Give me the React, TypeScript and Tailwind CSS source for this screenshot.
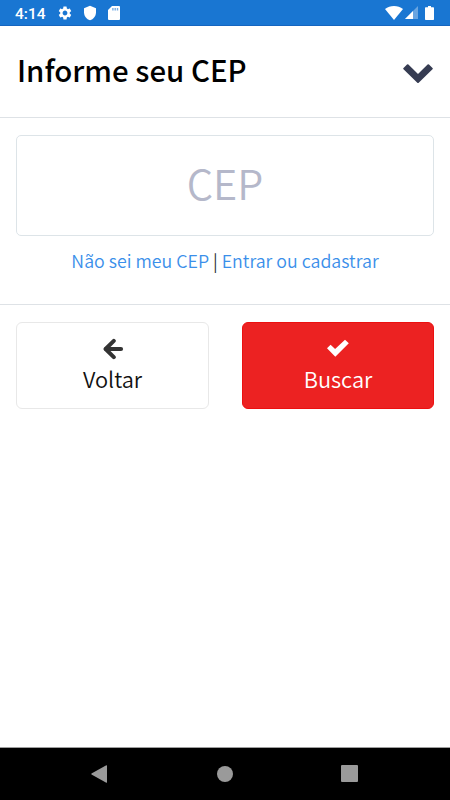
import React from 'react';
import { MdSettings, MdShield } from 'react-icons/md';

const StatusBar: React.FC = () => (
  <div className="flex h-[26px] shrink-0 items-center border-b border-[#1565c0] bg-[#1976d2] pl-[15px] pr-4 text-white">
    <span className="w-[42px] pt-[5px] font-['Roboto',sans-serif] text-[15.5px] font-medium leading-none">4:14</span>
    <MdSettings className="h-4 w-4" />
    <MdShield className="ml-[9px] h-4 w-4" />
    <svg className="ml-[10px]" width="12" height="14" viewBox="0 0 12 14" fill="currentColor">
      <path d="M4 0 H11 Q12 0 12 1 V13 Q12 14 11 14 H1 Q0 14 0 13 V4 Z" />
      <path d="M4.2 2 H5.6 V4.5 H4.2 Z M6.5 2 H7.9 V4.5 H6.5 Z M8.8 2 H10.2 V4.5 H8.8 Z" fill="#76ace4" />
    </svg>

    {/* Connectivity and battery */}
    <svg className="ml-auto" width="18" height="14" viewBox="0 0 18 14" fill="currentColor">
      <path d="M9 14 L0 3 C5 -1 13 -1 18 3 Z" />
    </svg>
    <svg className="ml-0.5" width="13" height="13" viewBox="0 0 13 13" fill="currentColor">
      <path d="M13 0 V13 H0 Z" opacity="0.35" />
      <path d="M8 5 V13 H0 Z" />
    </svg>
    <svg className="ml-[7px]" width="9" height="14" viewBox="0 0 9 14" fill="currentColor">
      <path d="M3 0 H6 V1.3 H8.3 Q9 1.3 9 2 V13.3 Q9 14 8.3 14 H.7 Q0 14 0 13.3 V2 Q0 1.3 .7 1.3 H3 Z" />
    </svg>
  </div>
);

const NavigationBar: React.FC = () => (
  <div className="flex h-[53px] shrink-0 items-center justify-between border-t border-[#9e9e9e] bg-black pb-px pl-[91px] pr-[92px] text-[#9a9a9a]">
    <svg width="16" height="18" viewBox="0 0 16 18" fill="currentColor">
      <path d="M15.3 .2 Q16 0 16 .7 V17.3 Q16 18 15.3 17.7 L.5 9.5 Q0 9 .5 8.5 Z" />
    </svg>
    <span className="ml-px h-4 w-4 rounded-full bg-[#9a9a9a]" />
    <span className="h-[17px] w-[17px] rounded-[1px] bg-[#9a9a9a]" />
  </div>
);

export default function App() {
  return (
    <div className="flex h-[800px] w-[450px] flex-col overflow-hidden bg-white font-['Noto_Sans_CJK_SC',sans-serif]">
      <StatusBar />

      <header className="flex h-[92px] shrink-0 items-center justify-between border-b border-[#dee2e6] px-4">
        <h1 className="pb-[3px] pl-px text-[29.4px] font-medium leading-none text-black">Informe seu CEP</h1>
        <svg className="mr-px mt-[5px]" width="30" height="20" viewBox="0 0 30 20" fill="#363c52">
          <path d="M.5 5.3 Q-.1 4.6 .5 4 L4 .5 Q4.7 -.1 5.4 .5 L15 10 L24.6 .5 Q25.3 -.1 26 .5 L29.5 4 Q30.1 4.6 29.5 5.3 L15.7 18.8 Q15 19.4 14.3 18.8 Z" />
        </svg>
      </header>

      <main className="h-[187px] shrink-0 border-b border-[#dee2e6] px-4 pt-[17px]">
        <input
          type="text"
          placeholder="CEP"
          className="block h-[101px] w-full rounded-[5px] border border-[#dde4e8] pb-2 text-center text-[41.5px] font-[350] leading-none placeholder:text-[#b5b8ca]"
        />
        <p className="mt-2.5 whitespace-nowrap text-center text-[17.8px] font-[350] leading-7 text-[#212529]">
          <a className="text-[#3b8fea]">Não sei meu CEP</a> | <a className="text-[#3b8fea]">Entrar ou cadastrar</a>
        </p>
      </main>

      <div className="flex flex-1 items-start justify-between px-4 pt-[17px]">
        <button className="flex h-[87px] w-[193px] flex-col items-center rounded-md border border-[#e8e8e8] pt-[15px] text-[#111]">
          <svg className="h-[22px] w-[22px]" viewBox="0 0 22 22" fill="none" stroke="#333" strokeWidth="4" strokeLinecap="round" strokeLinejoin="round">
            <path d="M11.8 2.8 L3.6 11 L11.8 19.2" />
            <path d="M4 11 H19" strokeWidth="4.2" />
          </svg>
          <span className="mt-[5px] text-[21.8px] font-[350] leading-7">Voltar</span>
        </button>
        <button className="flex h-[87px] w-[192px] flex-col items-center rounded-md border border-[#ec1010] bg-[#ec2222] pt-[15px] text-white">
          <svg className="h-[22px] w-[22px]" viewBox="0 0 22 22" fill="currentColor">
            <path d="M0 10.3 L3.6 6.8 L8.1 11 L18 1.8 L21.8 5.3 L8.3 18.8 Z" />
          </svg>
          <span className="mt-[5px] text-[21.8px] font-[350] leading-7">Buscar</span>
        </button>
      </div>

      <NavigationBar />
    </div>
  );
}
